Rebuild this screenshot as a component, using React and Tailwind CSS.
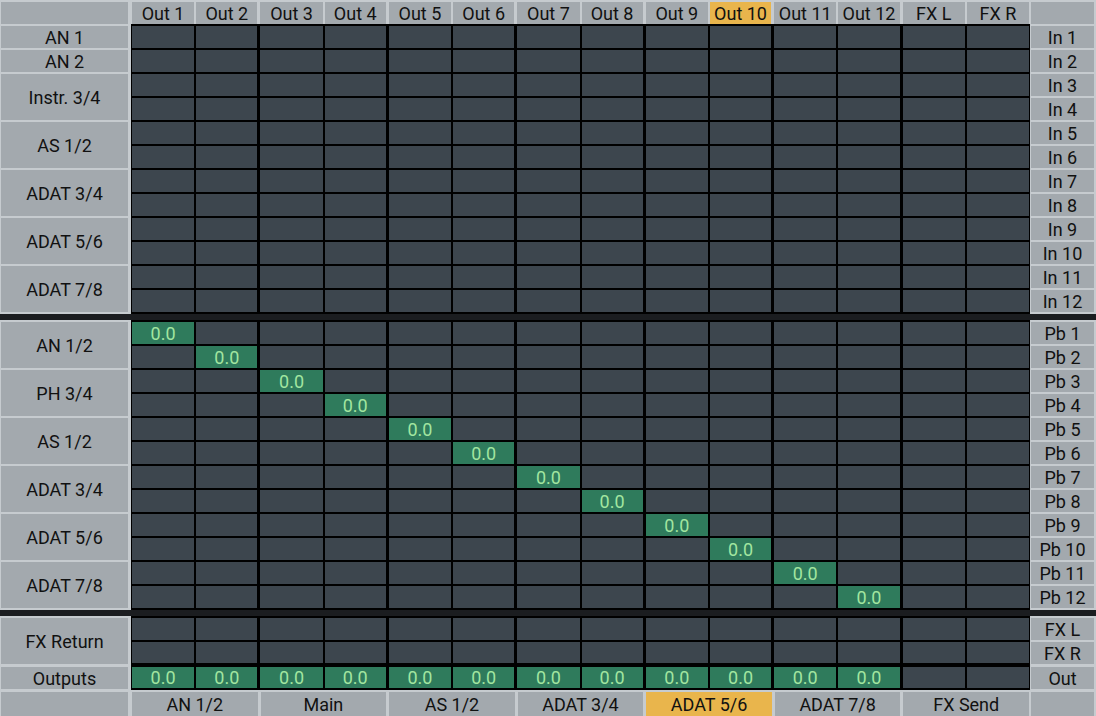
const outs = ['Out 1', 'Out 2', 'Out 3', 'Out 4', 'Out 5', 'Out 6', 'Out 7', 'Out 8', 'Out 9', 'Out 10', 'Out 11', 'Out 12', 'FX L', 'FX R'];
const busGroups = ['AN 1/2', 'Main', 'AS 1/2', 'ADAT 3/4', 'ADAT 5/6', 'ADAT 7/8', 'FX Send'];

const inLabels = [
  ['AN 1', 1],
  ['AN 2', 1],
  ['Instr. 3/4', 2],
  ['AS 1/2', 2],
  ['ADAT 3/4', 2],
  ['ADAT 5/6', 2],
  ['ADAT 7/8', 2],
];
const pbLabels = [
  ['AN 1/2', 2],
  ['PH 3/4', 2],
  ['AS 1/2', 2],
  ['ADAT 3/4', 2],
  ['ADAT 5/6', 2],
  ['ADAT 7/8', 2],
];

const range = (n) => Array.from({ length: n }, (_, i) => i);

// second column of each stereo pair gets a wider divider
const colEdge = (c) => (c % 2 === 1 && c < 13 ? 'mr-[1px]' : '');

const Label = ({ text, rows = 1, hot, extra = '' }) => (
  <div
    className={`flex items-center justify-center leading-none pt-[1px] text-[18px] text-[#111] ${
      hot ? 'bg-[#e9b54c]' : 'bg-[#a3a9ae]'
    } ${rows === 2 ? 'h-[46px]' : 'h-[22px]'} ${extra}`}
  >
    {text}
  </div>
);

const Cell = ({ value, c, extra = '' }) => (
  <div
    className={`flex items-center justify-center leading-none pt-[1px] text-[18px] ${
      value != null ? 'bg-[#2f7b5c] text-[#a2e6a0]' : 'bg-[#3d464e]'
    } ${colEdge(c)} ${extra}`}
  >
    {value}
  </div>
);

const Band = ({ left, right, children }) => (
  <div className="flex">
    <div className="w-[131px] pl-[1px] pr-[3px] pt-[2px] flex flex-col gap-[2px]">{left}</div>
    <div className="w-[899px] bg-black px-[1px] pt-[2px] pb-[2px]">
      <div className="grid grid-cols-[repeat(14,minmax(0,1fr))] auto-rows-[22px] gap-[2px]">{children}</div>
    </div>
    <div className="flex-1 pl-[1px] pr-[2px] pt-[2px] flex flex-col gap-[2px]">{right}</div>
  </div>
);

const Separator = () => <div className="h-[6px] bg-[#1b1d20]" />;

export default function App() {
  return (
    <div className="w-[1096px] h-[716px] overflow-hidden bg-[#c6cbcf] flex flex-col font-['Roboto',sans-serif] select-none">
      {/* output header */}
      <div className="flex pt-[2px] h-[24px]">
        <div className="w-[131px] pl-[1px] pr-[3px]">
          <div className="h-[22px] bg-[#a3a9ae]" />
        </div>
        <div className="w-[899px] px-[1px] grid grid-cols-[repeat(14,minmax(0,1fr))] gap-[2px]">
          {outs.map((o, c) => (
            <div
              key={o}
              className={`flex items-center justify-center leading-none pt-[1px] text-[18px] text-[#111] ${
                o === 'Out 10' ? 'bg-[#e9b54c]' : 'bg-[#a3a9ae]'
              } ${colEdge(c)}`}
            >
              {o}
            </div>
          ))}
        </div>
        <div className="flex-1 pl-[1px] pr-[2px]">
          <div className="h-[22px] bg-[#a3a9ae]" />
        </div>
      </div>

      {/* hardware inputs */}
      <Band
        left={inLabels.map(([t, r]) => <Label key={t} text={t} rows={r} />)}
        right={range(12).map((i) => <Label key={i} text={`In ${i + 1}`} />)}
      >
        {range(12).map((r) => range(14).map((c) => <Cell key={`${r}-${c}`} c={c} />))}
      </Band>

      <Separator />

      {/* playback channels */}
      <Band
        left={pbLabels.map(([t, r]) => <Label key={t} text={t} rows={r} />)}
        right={range(12).map((i) => <Label key={i} text={`Pb ${i + 1}`} />)}
      >
        {range(12).map((r) =>
          range(14).map((c) => <Cell key={`${r}-${c}`} c={c} value={r === c ? '0.0' : null} />)
        )}
      </Band>

      <Separator />

      {/* fx return + output levels */}
      <Band
        left={[
          <Label key="fx" text="FX Return" rows={2} />,
          <Label key="out" text="Outputs" extra="mt-[1px]" />,
        ]}
        right={[
          <Label key="l" text="FX L" />,
          <Label key="r" text="FX R" />,
          <Label key="o" text="Out" extra="mt-[1px]" />,
        ]}
      >
        {range(14).map((c) => <Cell key={`l-${c}`} c={c} />)}
        {range(14).map((c) => <Cell key={`r-${c}`} c={c} extra="mb-[1px]" />)}
        {range(14).map((c) => (
          <Cell key={`o-${c}`} c={c} value={c < 12 ? '0.0' : null} extra="mt-[1px]" />
        ))}
      </Band>

      {/* output bus groups */}
      <div className="flex flex-1 pt-[2px]">
        <div className="w-[131px] pl-[1px] pr-[3px] flex">
          <div className="flex-1 bg-[#a3a9ae]" />
        </div>
        <div className="w-[899px] px-[1px] grid grid-cols-[repeat(7,minmax(0,1fr))] gap-[3px]">
          {busGroups.map((b) => (
            <div
              key={b}
              className={`flex items-center justify-center leading-none pt-[1px] text-[18px] text-[#111] ${
                b === 'ADAT 5/6' ? 'bg-[#e9b54c]' : 'bg-[#a3a9ae]'
              }`}
            >
              {b}
            </div>
          ))}
        </div>
        <div className="flex-1 pl-[1px] pr-[2px] flex">
          <div className="flex-1 bg-[#a3a9ae]" />
        </div>
      </div>
    </div>
  );
}
